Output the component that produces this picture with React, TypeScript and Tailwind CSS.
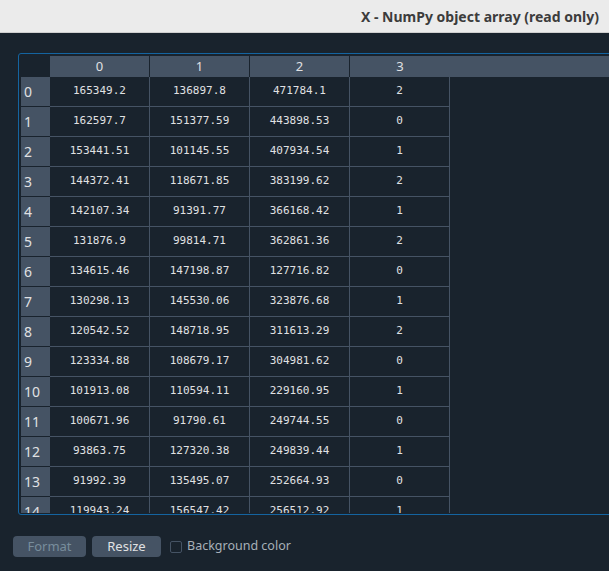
import { useMemo } from 'react';

const rows: [string, string, string, string][] = [
  ['165349.2', '136897.8', '471784.1', '2'],
  ['162597.7', '151377.59', '443898.53', '0'],
  ['153441.51', '101145.55', '407934.54', '1'],
  ['144372.41', '118671.85', '383199.62', '2'],
  ['142107.34', '91391.77', '366168.42', '1'],
  ['131876.9', '99814.71', '362861.36', '2'],
  ['134615.46', '147198.87', '127716.82', '0'],
  ['130298.13', '145530.06', '323876.68', '1'],
  ['120542.52', '148718.95', '311613.29', '2'],
  ['123334.88', '108679.17', '304981.62', '0'],
  ['101913.08', '110594.11', '229160.95', '1'],
  ['100671.96', '91790.61', '249744.55', '0'],
  ['93863.75', '127320.38', '249839.44', '1'],
  ['91992.39', '135495.07', '252664.93', '0'],
  ['119943.24', '156547.42', '256512.92', '1'],
];

const sans = "font-['Noto_Sans','DejaVu_Sans',sans-serif]";

export default function App() {
  const cols = useMemo(() => ['0', '1', '2', '3'], []);

  return (
    <div className="w-[609px] h-[571px] overflow-hidden bg-[#19232d] flex flex-col">
      {/* window title */}
      <div className="h-[33px] shrink-0 bg-[#ebebeb] border-b border-[#cfcfcf] flex items-center justify-end pr-[10px]">
        <span className={`${sans} text-[14px] font-bold text-[#3c3c3c]`}>
          X - NumPy object array (read only)
        </span>
      </div>

      {/* table frame */}
      <div className="mt-[20px] ml-[18px] w-[620px] h-[462px] shrink-0 border border-[#1464a0] rounded-[3px] pt-[2px] pl-[2px] overflow-hidden">
        <div className="h-[457px] overflow-hidden">
          {/* horizontal header */}
          <div className="flex h-[21px]">
            <div className="w-[29px] shrink-0" />
            {cols.map((c, i) => (
              <div
                key={c}
                className={`${sans} w-[100px] shrink-0 bg-[#455364] text-[#e0e1e3] text-[13px] flex items-center justify-center ${i < 3 ? 'border-r border-[#19232d]' : ''}`}
              >
                {c}
              </div>
            ))}
            <div className="flex-1 bg-[#455364]" />
          </div>

          {/* body */}
          {rows.map((r, i) => (
            <div key={i} className="flex h-[30px]">
              <div
                className={`${sans} w-[29px] shrink-0 bg-[#455364] border-b border-[#19232d] text-[#e0e1e3] text-[14px] flex items-center pl-[3px]`}
              >
                {i}
              </div>
              {r.map((v, j) => (
                <div
                  key={j}
                  className="w-[100px] shrink-0 border-r border-b border-[#455364] flex items-center justify-center font-['DejaVu_Sans_Mono',monospace] text-[11px] text-[#e0e1e3]"
                >
                  {v}
                </div>
              ))}
            </div>
          ))}
        </div>
      </div>

      {/* bottom controls */}
      <div className="flex items-center mt-[21px] ml-[13px] gap-[6px]">
        <button className={`${sans} w-[73px] h-[21px] rounded-[4px] bg-[#455364] text-[13px] text-[#788d9c]`}>
          Format
        </button>
        <button className={`${sans} w-[69px] h-[21px] rounded-[4px] bg-[#455364] text-[13px] text-[#e0e1e3]`}>
          Resize
        </button>
        <label className="flex items-center ml-[3px] gap-[5px]">
          <span className="w-[12px] h-[12px] border border-[#455364] rounded-[2px] bg-[#19232d]" />
          <span className={`${sans} text-[12.5px] text-[#a7b0b8]`}>Background color</span>
        </label>
      </div>
    </div>
  );
}
